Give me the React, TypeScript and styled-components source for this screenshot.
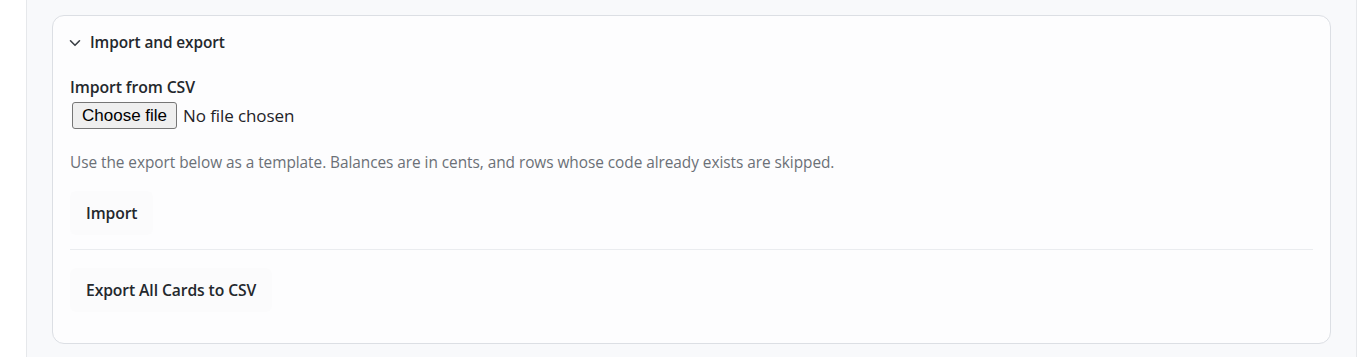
import React from "react";
import styled, { createGlobalStyle } from "styled-components";

const Global = createGlobalStyle`
  html, body { margin: 0; padding: 0; background: #ffffff; }
  body { font-family: "Open Sans", "Noto Sans", sans-serif; color: #1f2328; }
`;

const Shell = styled.div`
  margin-left: 26px;
  width: 1331px;
  height: 357px;
  box-sizing: border-box;
  border-left: 1px solid #e6e8eb;
  border-right: 1px solid #e6e8eb;
  background: #f8f9fb;
  padding: 15px 25px 0 25px;
  overflow: hidden;
`;

const Card = styled.section`
  box-sizing: border-box;
  height: 329px;
  border: 1px solid #dcdfe4;
  border-radius: 12px;
  background: #fdfdfe;
  padding: 0 17px;
  display: flex;
  flex-direction: column;
`;

const Header = styled.div`
  display: flex;
  align-items: center;
  gap: 9px;
  padding: 16px 0;
  line-height: 22px;
  font-size: 15.4px;
  font-weight: 600;
  color: #24282d;
  letter-spacing: -0.1px;
`;

const Chevron = styled.svg`
  width: 12px;
  height: 12px;
  flex: none;
  margin-left: -1px;
`;

const Label = styled.div`
  margin-top: 7px;
  font-size: 15.8px;
  line-height: 20px;
  font-weight: 600;
  color: #24282d;
  letter-spacing: -0.1px;
`;

const FileRow = styled.div`
  display: flex;
  align-items: center;
  gap: 6px;
  margin-top: 5px;
  height: 27px;
`;

const HiddenInput = styled.input`
  display: none;
`;

const FileButton = styled.label`
  box-sizing: border-box;
  margin-left: 2px;
  height: 27px;
  padding: 0 9px;
  display: flex;
  align-items: center;
  font-family: "Liberation Sans", Arial, sans-serif;
  font-size: 17px;
  color: #000;
  background: #efefef;
  border: 1px solid #767676;
  border-radius: 3px;
  cursor: default;
`;

const FileStatus = styled.span`
  font-family: "Open Sans", sans-serif;
  font-size: 17px;
  color: #1f2328;
  letter-spacing: -0.1px;
`;

const Help = styled.p`
  margin: 24px 0 0 0;
  font-size: 15.4px;
  line-height: 20px;
  color: #6b7077;
  letter-spacing: -0.05px;
`;

const ActionButton = styled.button<{ $top: number }>`
  align-self: flex-start;
  margin-top: ${(p) => p.$top}px;
  height: 44px;
  padding: 0 16px;
  border: none;
  border-radius: 6px;
  background: #fbfbfc;
  font-family: "Open Sans", sans-serif;
  font-size: 15.7px;
  font-weight: 600;
  color: #24282d;
  letter-spacing: -0.1px;
  cursor: pointer;
`;

const Divider = styled.hr`
  margin: 14px 0 0 0;
  border: none;
  border-top: 1px solid #eaecef;
  height: 0;
`;

export default function App() {
  return (
    <>
      <Global />
      <Shell>
        <Card>
          <Header>
            <Chevron viewBox="0 0 12 12" fill="none">
              <path d="M1.5 3.8l4.5 4.5 4.5-4.5" stroke="#3a3f45" strokeWidth="1.6" strokeLinecap="round" strokeLinejoin="round" />
            </Chevron>
            Import and export
          </Header>
          <Label>Import from CSV</Label>
          <FileRow>
            <FileButton htmlFor="csv-file">Choose file</FileButton>
            <FileStatus>No file chosen</FileStatus>
            <HiddenInput id="csv-file" type="file" accept=".csv" />
          </FileRow>
          <Help>
            Use the export below as a template. Balances are in cents, and rows whose code already exists are skipped.
          </Help>
          <ActionButton $top={18}>Import</ActionButton>
          <Divider />
          <ActionButton $top={18}>Export All Cards to CSV</ActionButton>
        </Card>
      </Shell>
    </>
  );
}
